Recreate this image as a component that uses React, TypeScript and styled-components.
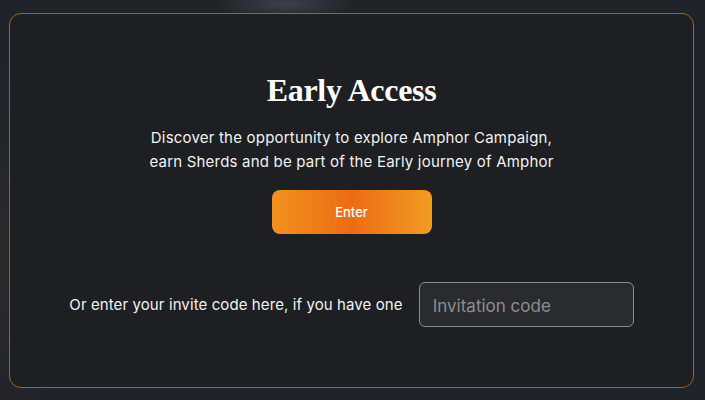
import styled, { createGlobalStyle } from "styled-components";

const GlobalStyle = createGlobalStyle`
  html, body {
    margin: 0;
    padding: 0;
  }
  body {
    width: 705px;
    height: 400px;
    overflow: hidden;
    background:
      radial-gradient(ellipse 70px 16px at 285px 4px, rgba(90, 94, 102, 0.5), rgba(0, 0, 0, 0)),
      radial-gradient(ellipse 60px 200px at 0px 260px, rgba(70, 56, 40, 0.3), rgba(0, 0, 0, 0)),
      #20232a;
    font-family: Inter, "Liberation Sans", sans-serif;
  }
`;

const Page = styled.div`
  padding: 13px 11px 12px 9px;
`;

const Card = styled.section`
  box-sizing: border-box;
  height: 375px;
  border: 1px solid #9a6328;
  border-radius: 12px;
  background: #1d1f22;
  display: flex;
  flex-direction: column;
  align-items: center;
  padding-top: 58px;
`;

const Title = styled.h1`
  margin: 0;
  font-family: "Liberation Serif", "DejaVu Serif", serif;
  font-weight: 700;
  font-size: 32px;
  line-height: 36px;
  letter-spacing: -0.3px;
  color: #ffffff;
`;

const Lead = styled.p`
  margin: 18px 0 0;
  text-align: center;
  font-size: 15px;
  line-height: 24px;
  letter-spacing: 0.2px;
  color: #f2f2f2;
`;

const EnterButton = styled.button`
  margin-top: 16px;
  width: 160px;
  height: 44px;
  border: none;
  border-radius: 8px;
  background: linear-gradient(90deg, #f2921e 0%, #ec6c15 50%, #f29c21 100%);
  color: #ffffff;
  font-family: Inter, "Liberation Sans", sans-serif;
  font-size: 13px;
  font-weight: 500;
  cursor: pointer;
`;

const InviteRow = styled.div`
  margin-top: 48px;
  display: flex;
  align-items: center;
  gap: 16px;
`;

const InviteLabel = styled.span`
  font-size: 15px;
  letter-spacing: 0.1px;
  color: #f2f2f2;
`;

const CodeInput = styled.input`
  box-sizing: border-box;
  width: 215px;
  height: 45px;
  padding: 2px 13px 0;
  border: 1px solid #8a8b8f;
  border-radius: 6px;
  background: #2a2b2f;
  color: #ffffff;
  font-family: Inter, "Liberation Sans", sans-serif;
  font-size: 17px;
  outline: none;
  &::placeholder {
    color: #8d8d92;
  }
`;

const App = () => {
  return (
    <>
      <GlobalStyle />
      <Page>
        <Card>
          <Title>Early Access</Title>
          <Lead>
            Discover the opportunity to explore Amphor Campaign,
            <br />
            earn Sherds and be part of the Early journey of Amphor
          </Lead>
          <EnterButton>Enter</EnterButton>
          <InviteRow>
            <InviteLabel>Or enter your invite code here, if you have one</InviteLabel>
            <CodeInput placeholder="Invitation code" />
          </InviteRow>
        </Card>
      </Page>
    </>
  );
};

export default App;
